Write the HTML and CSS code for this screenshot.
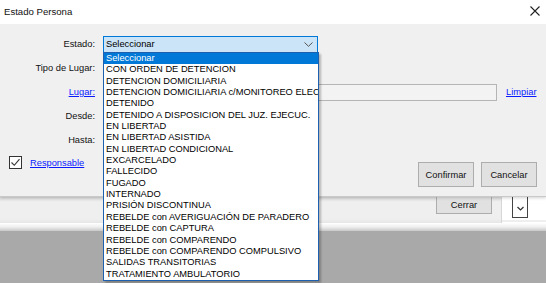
FILE: index.html
```html
<!DOCTYPE html>
<html>
<head>
<meta charset="utf-8">
<link rel="stylesheet" href="styles.css">
</head>
<body>
<div class="screen">
  <div class="dialog">
    <div class="titlebar">
      <span class="title">Estado Persona</span>
      <svg class="close" width="10" height="10" viewBox="0 0 10 10"><path d="M0.5 0.5L9.5 9.5M9.5 0.5L0.5 9.5" stroke="#222" stroke-width="1.1" fill="none"/></svg>
    </div>
    <div class="body">
      <div class="form">
        <span class="lbl">Estado:</span>
        <div class="combo"><span>Seleccionar</span><svg class="chev" width="9" height="5" viewBox="0 0 9 5"><path d="M0.5 0.5L4.5 4.3L8.5 0.5" stroke="#555" stroke-width="1" fill="none"/></svg></div>
        <span class="lbl">Tipo de Lugar:</span>
        <div class="field"></div>
        <a class="lbl link">Lugar:</a>
        <div class="field lugar"><div class="textbox"></div><a class="link">Limpiar</a></div>
        <span class="lbl">Desde:</span>
        <div class="field"></div>
        <span class="lbl">Hasta:</span>
        <div class="field"></div>
      </div>
      <div class="footer">
        <div class="check">
          <span class="box"><svg width="11" height="11" viewBox="0 0 11 11"><path d="M1.5 5.5L4.3 8.3L9.5 2.2" stroke="#333" stroke-width="1.1" fill="none"/></svg></span>
          <a class="link">Responsable</a>
        </div>
        <div class="buttons">
          <button class="btn">Confirmar</button>
          <button class="btn">Cancelar</button>
        </div>
      </div>
    </div>
  </div>
  <div class="behind">
    <div class="behind-row">
      <div class="panel"><button class="btn cerrar">Cerrar</button></div>
      <div class="mini-combo"><svg width="7" height="5" viewBox="0 0 7 5"><path d="M0.5 1L3.5 4L6.5 1" stroke="#333" stroke-width="1.2" fill="none"/></svg></div>
    </div>
    <div class="band"></div>
    <div class="desktop"></div>
  </div>
  <ul class="dropdown">
    <li class="sel">Seleccionar</li>
    <li>CON ORDEN DE DETENCION</li>
    <li>DETENCION DOMICILIARIA</li>
    <li>DETENCION DOMICILIARIA c/MONITOREO ELECTRONICO</li>
    <li>DETENIDO</li>
    <li>DETENIDO A DISPOSICION DEL JUZ. EJECUC.</li>
    <li>EN LIBERTAD</li>
    <li>EN LIBERTAD ASISTIDA</li>
    <li>EN LIBERTAD CONDICIONAL</li>
    <li>EXCARCELADO</li>
    <li>FALLECIDO</li>
    <li>FUGADO</li>
    <li>INTERNADO</li>
    <li>PRISIÓN DISCONTINUA</li>
    <li>REBELDE con AVERIGUACIÓN DE PARADERO</li>
    <li>REBELDE con CAPTURA</li>
    <li>REBELDE con COMPARENDO</li>
    <li>REBELDE con COMPARENDO COMPULSIVO</li>
    <li>SALIDAS TRANSITORIAS</li>
    <li>TRATAMIENTO AMBULATORIO</li>
  </ul>
</div>
</body>
</html>
```

FILE: styles.css
```css
* { box-sizing: border-box; }
html, body { margin: 0; padding: 0; }
body {
  width: 546px;
  height: 283px;
  overflow: hidden;
  font-family: "Liberation Sans", Arial, sans-serif;
  font-size: 9.3px;
  color: #000;
  background: #a9a9a9;
}
.screen {
  position: relative;
  width: 546px;
  height: 283px;
  display: flex;
  flex-direction: column;
}
.dialog {
  height: 197px;
  display: flex;
  flex-direction: column;
  border-bottom: 1px solid #c9c9c9;
  position: relative;
  z-index: 2;
  box-shadow: 0 1px 3px rgba(0,0,0,0.18);
}
.titlebar {
  height: 24px;
  background: #fff;
  display: flex;
  align-items: center;
  justify-content: space-between;
  padding: 0 6px 2px 4px;
}
.title {
  font-size: 9.6px;
  color: #111;
}
.body {
  flex: 1;
  background: #f0f0f0;
  padding-top: 8px;
  display: flex;
  flex-direction: column;
}
.form {
  display: grid;
  grid-template-columns: 95px 1fr;
  grid-auto-rows: 24px;
  column-gap: 8px;
  align-items: center;
}
.lbl {
  text-align: right;
  color: #111;
}
.link {
  color: #0a1bff;
  text-decoration: underline;
  cursor: pointer;
}
.combo {
  width: 215px;
  height: 17px;
  border: 1px solid #0078d7;
  background: #cce4f7;
  display: flex;
  align-items: center;
  justify-content: space-between;
  padding: 0 4px 0 2px;
}
.chev { display: block; }
.field { height: 17px; }
.lugar {
  display: flex;
  align-items: center;
  gap: 9px;
}
.textbox {
  width: 394px;
  height: 17px;
  border: 1px solid #b5b5b5;
  background: #f3f3f3;
}
.footer {
  display: flex;
  justify-content: space-between;
  align-items: flex-start;
  padding: 0 9px;
}
.check {
  display: flex;
  align-items: center;
  gap: 8px;
  margin-top: 4px;
}
.box {
  width: 13px;
  height: 13px;
  border: 1px solid #333;
  background: #fff;
  display: flex;
  align-items: center;
  justify-content: center;
}
.box svg { display: block; }
.buttons {
  display: flex;
  gap: 7px;
  margin-top: 10px;
}
.btn {
  font-family: "Liberation Sans", Arial, sans-serif;
  font-size: 9.3px;
  color: #111;
  width: 56px;
  height: 25px;
  background: #e1e1e1;
  border: 1px solid #adadad;
  padding: 0;
}
.behind {
  flex: 1;
  display: flex;
  flex-direction: column;
}
.behind-row {
  height: 26px;
  display: flex;
  background: linear-gradient(#ffffff, #ffffff 23px, #dedede 24px, #ffffff 25px);
}
.panel {
  width: 502px;
  height: 27px;
  background: linear-gradient(#dadada, #efefef 5px, #efefef 22px, #e6e6e6);
  border-bottom: 1px solid #cfcfcf;
  border-right: 1px solid #d6d6d6;
  display: flex;
  justify-content: flex-end;
  padding-right: 9px;
}
.cerrar {
  height: 17px;
  width: 56px;
  border-top: none;
  line-height: 10px;
  padding-top: 0;
}
.mini-combo {
  width: 16px;
  height: 21px;
  margin-left: 10px;
  border: 1px solid #444;
  border-top: none;
  background: #fff;
  display: flex;
  align-items: center;
  justify-content: center;
  padding-top: 3px;
}
.mini-combo svg { display: block; }
.band {
  height: 8px;
  background: linear-gradient(#ffffff, #eeeeee 50%, #c8c8c8);
}
.desktop {
  flex: 1;
  background: #a9a9a9;
}
.dropdown {
  position: absolute;
  left: 103px;
  top: 52px;
  width: 216px;
  margin: 0;
  padding: 0;
  list-style: none;
  background: #fff;
  border: 1px solid #1e5fae;
  box-shadow: 2px 2px 2px rgba(0,0,0,0.25);
  z-index: 5;
  overflow: hidden;
}
.dropdown li {
  height: 11.35px;
  line-height: 11.35px;
  padding-left: 2px;
  white-space: nowrap;
  overflow: hidden;
  color: #000;
}
.dropdown li.sel {
  background: #0078d7;
  color: #fff;
}
```
